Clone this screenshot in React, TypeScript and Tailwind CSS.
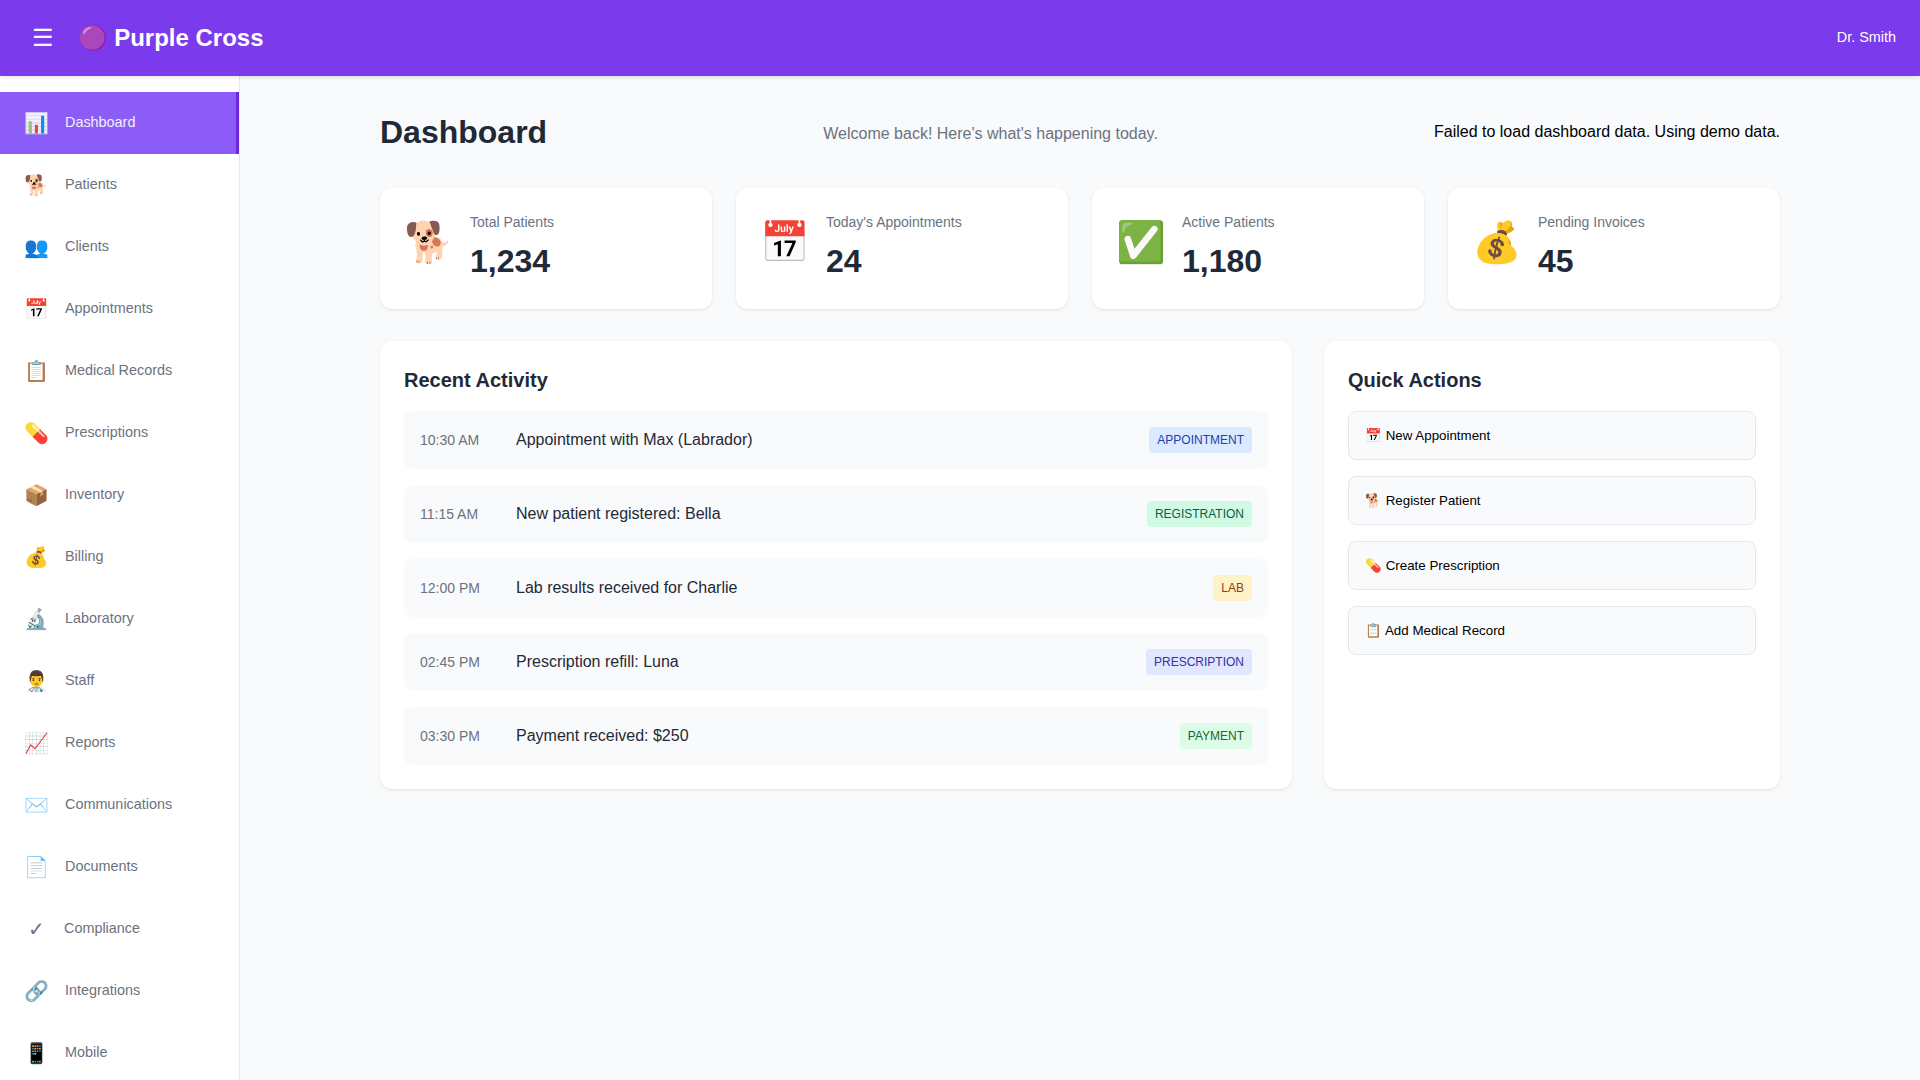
const nav: [string, string][] = [
  ["📊", "Dashboard"], ["🐕", "Patients"], ["👥", "Clients"], ["📅", "Appointments"],
  ["📋", "Medical Records"], ["💊", "Prescriptions"], ["📦", "Inventory"], ["💰", "Billing"],
  ["🔬", "Laboratory"], ["👨‍⚕️", "Staff"], ["📈", "Reports"], ["✉️", "Communications"],
  ["📄", "Documents"], ["✓", "Compliance"], ["🔗", "Integrations"], ["📱", "Mobile"],
];
const stats: [string, string, string][] = [
  ["🐕", "Total Patients", "1,234"], ["📅", "Today's Appointments", "24"],
  ["✅", "Active Patients", "1,180"], ["💰", "Pending Invoices", "45"],
];
const activity: [string, string, string, string][] = [
  ["10:30 AM", "Appointment with Max (Labrador)", "APPOINTMENT", "bg-[#dbeafe] text-[#1e40af]"],
  ["11:15 AM", "New patient registered: Bella", "REGISTRATION", "bg-[#d1fae5] text-[#065f46]"],
  ["12:00 PM", "Lab results received for Charlie", "LAB", "bg-[#fef3c7] text-[#92400e]"],
  ["02:45 PM", "Prescription refill: Luna", "PRESCRIPTION", "bg-[#e0e7ff] text-[#3730a3]"],
  ["03:30 PM", "Payment received: $250", "PAYMENT", "bg-[#dcfce7] text-[#166534]"],
];
const actions = ["📅 New Appointment", "🐕 Register Patient", "💊 Create Prescription", "📋 Add Medical Record"];

export default function App() {
  return (
    <div className="h-screen overflow-hidden flex flex-col bg-[#f9fafb] leading-[1.5] font-['Liberation_Sans',Arial,sans-serif] text-[#1f2937]">
      <header className="h-[76px] shrink-0 bg-[#7c3aed] text-white flex items-center justify-between px-6 shadow-[0_2px_4px_rgba(0,0,0,0.1)] relative z-10">
        <div className="flex items-center gap-[15.5px]">
          <button className="p-2 text-[24px] text-white">☰</button>
          <h1 className="text-[24px] font-bold">🟣 Purple Cross</h1>
        </div>
        <span className="text-[14.4px]">Dr. Smith</span>
      </header>
      <div className="flex flex-1 min-h-0">
        <aside className="w-[240px] shrink-0 bg-white border-r border-[#e5e7eb] pt-4 overflow-hidden">
          {nav.map(([icon, label], i) => (
            <div
              key={label}
              className={`h-[62px] flex items-center gap-4 px-6 text-[14.4px] ${i === 0 ? "bg-[#8b5cf6] text-white/90 border-r-[3px] border-[#6d28d9]" : "text-[#6b7280]"}`}
            >
              <span className="text-[20px] min-w-6 text-center">{icon}</span>
              <span>{label}</span>
            </div>
          ))}
        </aside>
        <main className="flex-1 min-w-0 pt-8">
          <div className="w-[1400px] mx-auto">
            <div className="h-[48px] flex items-center justify-between mb-8">
              <h2 className="text-[32px] font-bold">Dashboard</h2>
              <p className="text-base text-[#6b7280] mt-1">Welcome back! Here's what's happening today.</p>
              <p className="text-base text-black">Failed to load dashboard data. Using demo data.</p>
            </div>
            <div className="grid grid-cols-4 gap-6 mb-8">
              {stats.map(([icon, label, value]) => (
                <div key={label} className="bg-white rounded-xl shadow-[0_1px_3px_rgba(0,0,0,0.1)] p-6 flex items-start gap-4">
                  <span className="text-[40px]">{icon}</span>
                  <div>
                    <div className="text-[14px] text-[#6b7280] mb-1">{label}</div>
                    <div className="text-[32px] font-bold">{value}</div>
                  </div>
                </div>
              ))}
            </div>
            <div className="grid grid-cols-[2fr_1fr] gap-8">
              <section className="bg-white rounded-xl shadow-[0_1px_3px_rgba(0,0,0,0.1)] p-6">
                <h3 className="text-[20px] font-bold mb-4">Recent Activity</h3>
                <div className="flex flex-col gap-4">
                  {activity.map(([time, text, tag, cls]) => (
                    <div key={time} className="h-[58px] bg-[#f9fafb] rounded-lg px-4 flex items-center gap-4">
                      <span className="w-20 text-[14px] text-[#6b7280]">{time}</span>
                      <span className="flex-1 text-base text-[#1f2937]">{text}</span>
                      <span className={`px-2 py-1 rounded text-[12px] leading-[18px] ${cls}`}>{tag}</span>
                    </div>
                  ))}
                </div>
              </section>
              <section className="bg-white rounded-xl shadow-[0_1px_3px_rgba(0,0,0,0.1)] p-6">
                <h3 className="text-[20px] font-bold mb-4">Quick Actions</h3>
                <div className="flex flex-col gap-4">
                  {actions.map((a) => (
                    <button key={a} className="h-[49px] text-left px-4 bg-[#f9fafb] border border-[#e5e7eb] rounded-lg text-[13.33px] leading-normal text-black">{a}</button>
                  ))}
                </div>
              </section>
            </div>
          </div>
        </main>
      </div>
    </div>
  );
}
